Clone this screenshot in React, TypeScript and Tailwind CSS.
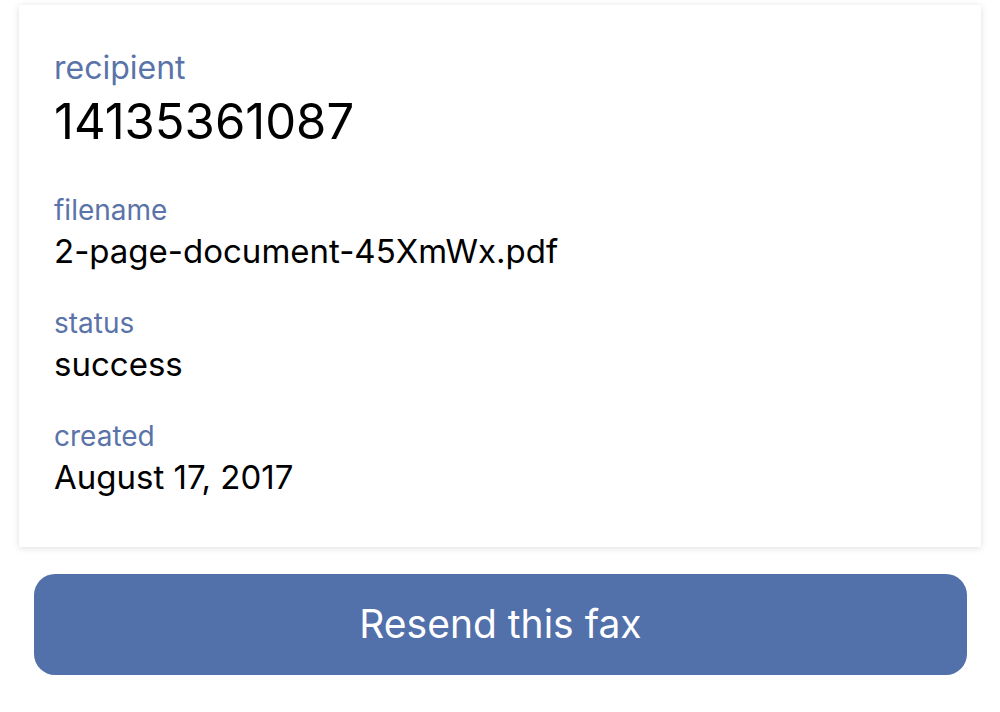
import React from 'react';

const fields = [
  { label: 'filename', value: '2-page-document-45XmWx.pdf' },
  { label: 'status', value: 'success' },
  { label: 'created', value: 'August 17, 2017' },
];

export default function App() {
  return (
    <div
      className="w-[1000px] h-[712px] bg-white pt-[5px]"
      style={{ fontFamily: 'Inter, "Noto Sans", sans-serif' }}
    >
      <div className="mx-[19px] bg-white shadow-[0_1px_7px_rgba(0,0,0,0.13)] pl-[35px] pt-[45px] pb-[51px]">
        <p className="text-[32px] leading-[36px] text-[#5a73a8]">recipient</p>
        <p className="mt-[10px] text-[49px] leading-[52px] text-black">14135361087</p>

        <div className="mt-[46px] flex flex-col gap-[37px]">
          {fields.map((f) => (
            <div key={f.label}>
              <p className="text-[28px] leading-[32px] text-[#5a73a8]">{f.label}</p>
              <p className="mt-[6px] text-[33px] leading-[38px] text-black">{f.value}</p>
            </div>
          ))}
        </div>
      </div>

      <button className="mt-[27px] ml-[34px] w-[933px] h-[101px] rounded-[21px] bg-[#5270aa] text-white text-[39px]">
        Resend this fax
      </button>
    </div>
  );
}
